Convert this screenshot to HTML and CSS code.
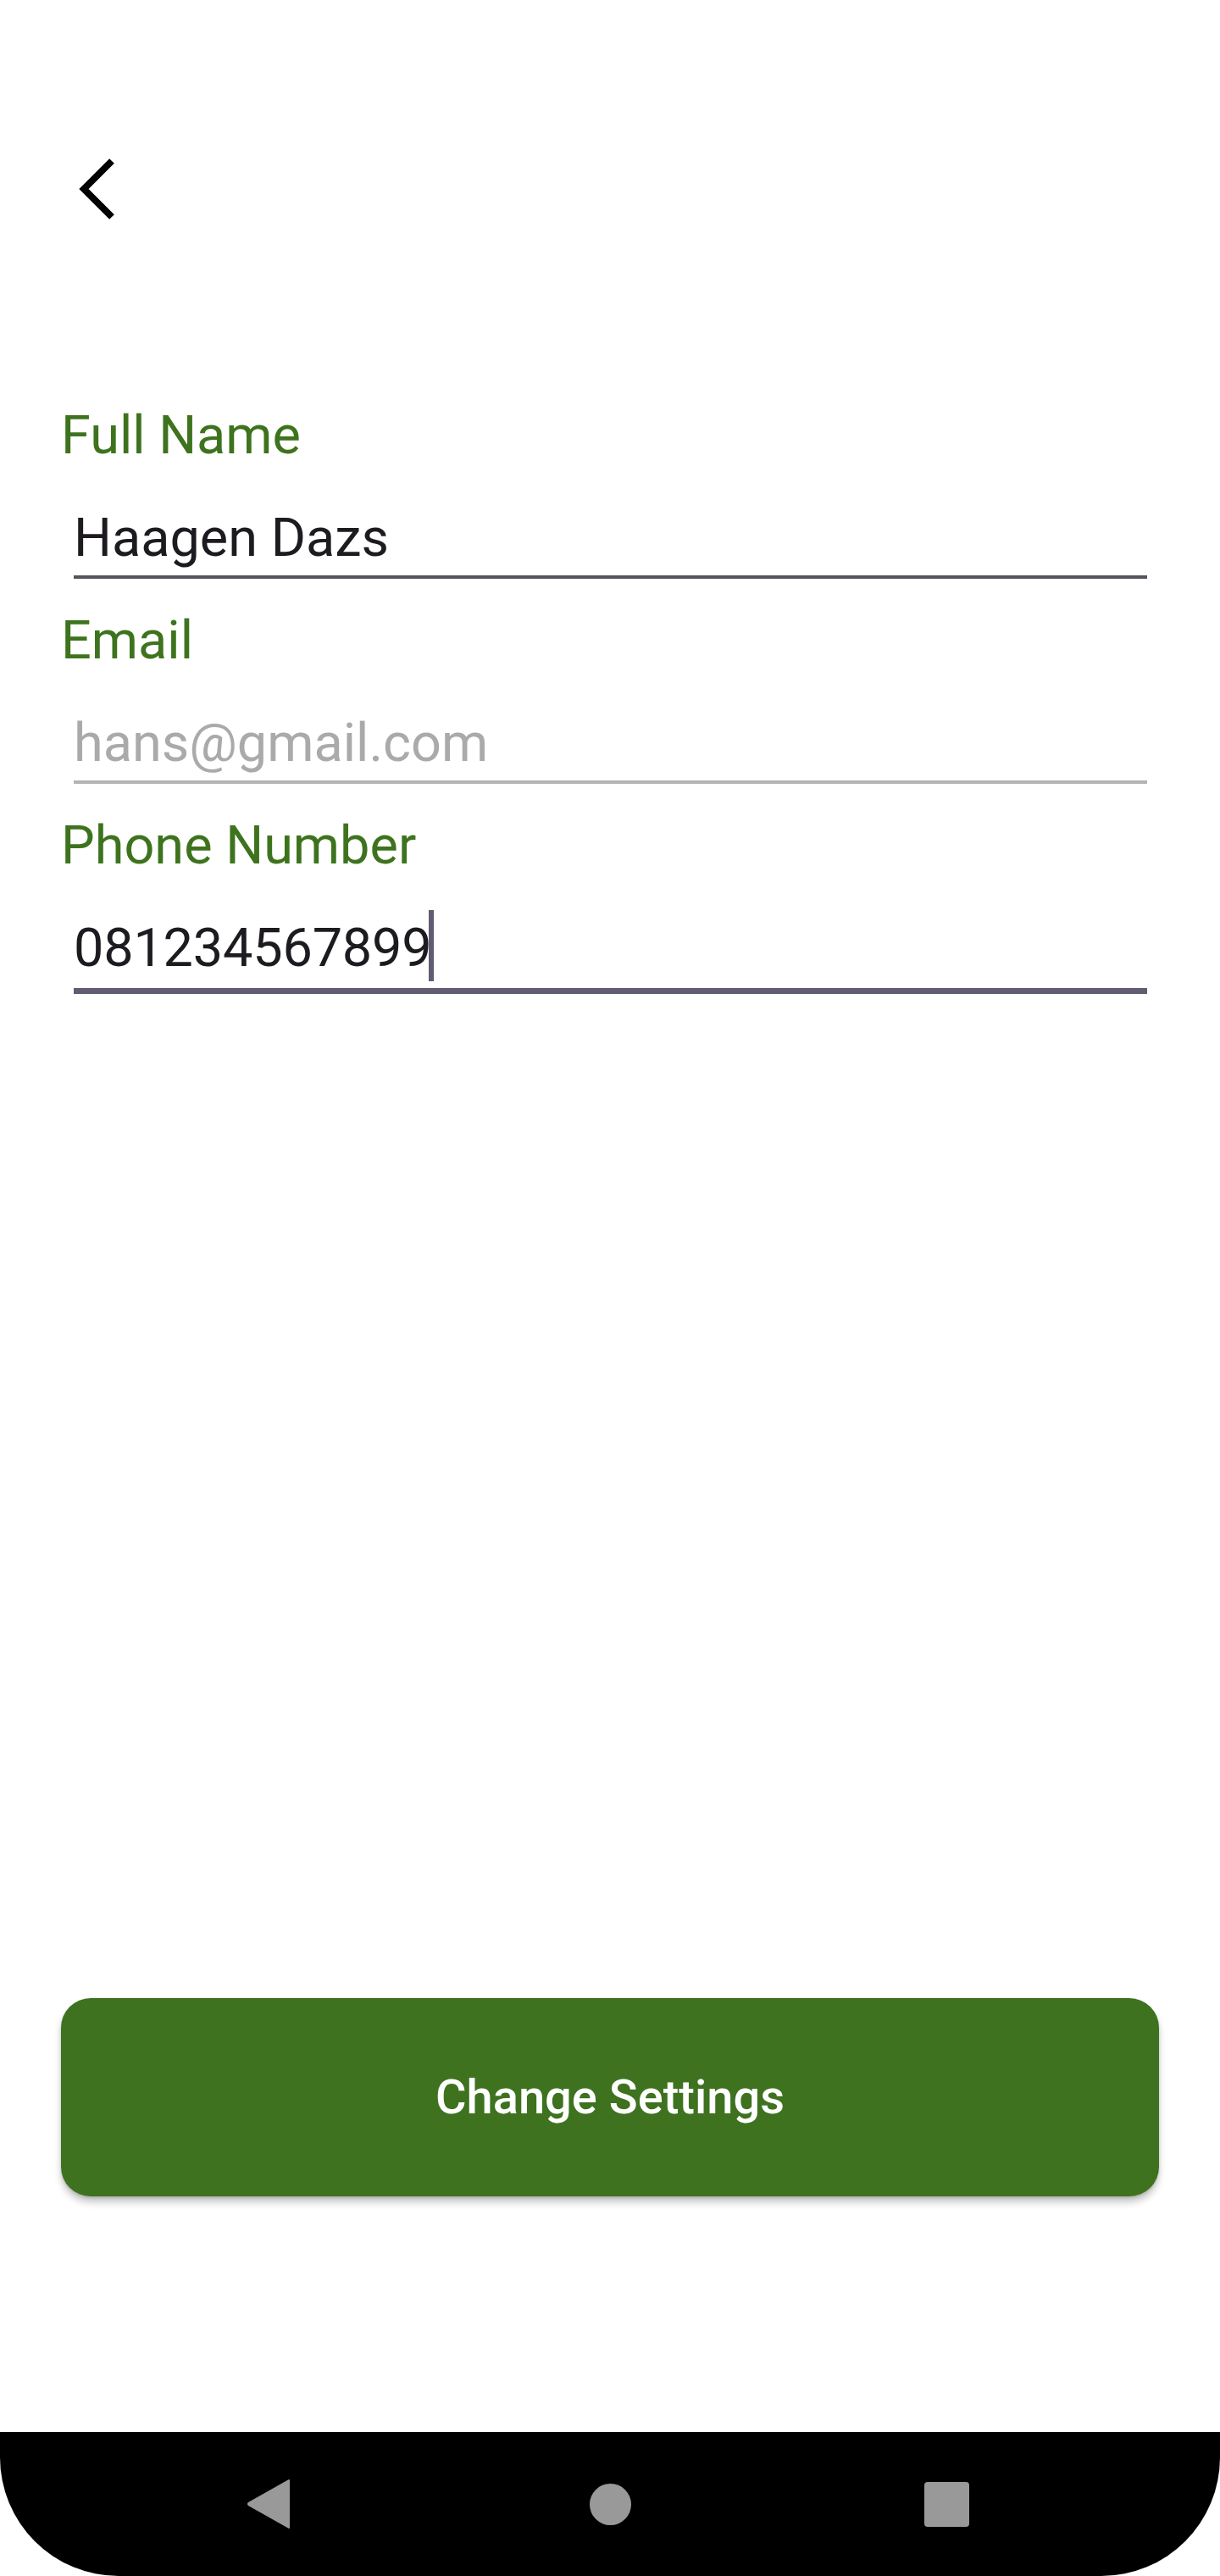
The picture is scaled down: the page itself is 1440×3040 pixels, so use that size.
FILE: index.html
```html
<!DOCTYPE html>
<html lang="en">
<head>
<meta charset="utf-8">
<title>Edit Profile</title>
<link rel="stylesheet" href="styles.css">
</head>
<body>
<div class="screen">
  <header class="topbar">
    <button class="back" aria-label="Back">
      <svg class="back-icon" width="48" height="72" viewBox="0 0 48 72" aria-hidden="true">
        <path d="M40 3 L7 36 L40 69" fill="none" stroke="#000" stroke-width="8" stroke-linejoin="miter" stroke-linecap="butt"/>
      </svg>
    </button>
  </header>

  <main class="form">
    <div class="field">
      <div class="label">Full Name</div>
      <div class="input">Haagen Dazs</div>
    </div>
    <div class="field">
      <div class="label">Email</div>
      <div class="input input-disabled">hans@gmail.com</div>
    </div>
    <div class="field">
      <div class="label">Phone Number</div>
      <div class="input input-focused"><span class="digits">081234567899</span><span class="caret"></span></div>
    </div>
  </main>

  <div class="spacer"></div>

  <div class="actions">
    <button class="primary">Change Settings</button>
  </div>

  <nav class="navbar">
    <div class="nav-slot">
      <svg width="56" height="60" viewBox="0 0 56 60" aria-hidden="true">
        <path d="M52 2 L52 58 L5 31.5 Q3 30 5 28.5 Z" fill="#999" stroke="#999" stroke-width="2" stroke-linejoin="round"/>
      </svg>
    </div>
    <div class="nav-slot">
      <span class="nav-home"></span>
    </div>
    <div class="nav-slot">
      <span class="nav-recent"></span>
    </div>
  </nav>
</div>
</body>
</html>
```

FILE: styles.css
```css
* { box-sizing: border-box; }

html, body {
  margin: 0;
  padding: 0;
  background: #ffffff;
}

.screen {
  width: 1440px;
  height: 3040px;
  display: flex;
  flex-direction: column;
  background: #ffffff;
  font-family: Roboto, "Noto Sans", "Liberation Sans", sans-serif;
}

.topbar {
  height: 476px;
  padding-top: 187px;
  padding-left: 92px;
}

.back {
  display: block;
  border: 0;
  padding: 0;
  margin: 0;
  background: transparent;
  width: 48px;
  height: 72px;
}

.back-icon { display: block; }

.form {
  padding: 0 86px 0 72px;
}

.field {
  margin-bottom: 35px;
}

.field:last-child {
  margin-bottom: 0;
}

.label {
  font-size: 63px;
  line-height: 75px;
  color: #3e731e;
  white-space: nowrap;
}

.input {
  margin-left: 15px;
  padding-top: 46px;
  padding-bottom: 7px;
  font-size: 63px;
  line-height: 75px;
  color: #1d1b20;
  border-bottom: 4px solid #55535c;
  white-space: nowrap;
}

.input-disabled {
  color: #aaaaaa;
  border-bottom-color: #b4b4b4;
}

.input-focused {
  padding-bottom: 10px;
  border-bottom: 7px solid #625b71;
}

.digits {
  letter-spacing: -0.2px;
}

.caret {
  position: relative;
  display: inline-block;
  width: 6px;
  height: 1px;
  vertical-align: baseline;
}

.caret::after {
  content: "";
  position: absolute;
  left: -3px;
  bottom: -18px;
  width: 6px;
  height: 84px;
  background: #625b71;
}

.spacer {
  flex: 1;
}

.actions {
  padding: 0 72px;
  margin-bottom: 278px;
}

.primary {
  display: block;
  width: 100%;
  height: 234px;
  border: 0;
  border-radius: 35px;
  background: #3e721f;
  color: #ffffff;
  font-family: Roboto, "Noto Sans", "Liberation Sans", sans-serif;
  font-size: 56px;
  font-weight: 500;
  box-shadow: 0 7px 8px rgba(0, 0, 0, 0.22), 0 2px 3px rgba(0, 0, 0, 0.12);
}

.navbar {
  height: 170px;
  flex-shrink: 0;
  background: #000000;
  border-radius: 0 0 140px 140px;
  display: flex;
  justify-content: center;
  align-items: center;
}

.nav-slot {
  width: 400px;
  display: flex;
  justify-content: center;
  align-items: center;
}

.nav-slot svg { display: block; margin-left: -6px; }

.nav-home {
  display: block;
  width: 49px;
  height: 49px;
  border-radius: 50%;
  background: #999999;
}

.nav-recent {
  display: block;
  width: 53px;
  height: 53px;
  border-radius: 4px;
  background: #999999;
  margin-left: -6px;
}
```
